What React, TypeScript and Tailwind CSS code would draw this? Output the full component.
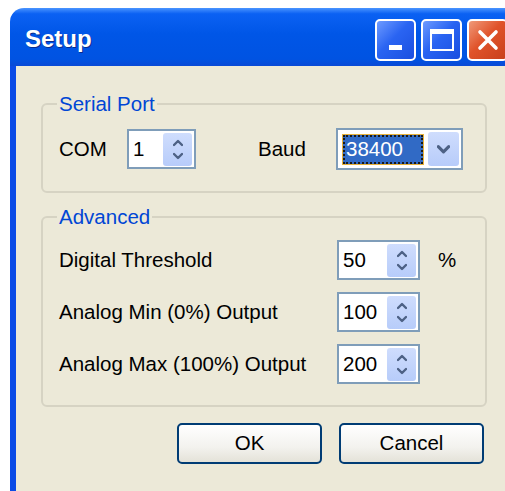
import React from 'react'

const font = "font-['Liberation_Sans',Arial,sans-serif]"

function Chevron({ dir, size = 10 }: { dir: 'up' | 'down'; size?: number }) {
  const d = dir === 'up' ? 'M1 6 L5 2 L9 6' : 'M1 2 L5 6 L9 2'
  return (
    <svg width={size} height={size * 0.8} viewBox="0 0 10 8" className="block">
      <path d={d} fill="none" stroke="#4D6185" strokeWidth="2.4" strokeLinecap="round" strokeLinejoin="round" />
    </svg>
  )
}

function SpinButton() {
  return (
    <div className="flex h-[33px] w-[29px] flex-col items-center justify-center gap-[5px] rounded-[3px] bg-[linear-gradient(to_bottom,#CFDDFD,#B7CCFA)]">
      <Chevron dir="up" />
      <Chevron dir="down" />
    </div>
  )
}

function Spin({ value, className }: { value: string; className: string }) {
  return (
    <div className={`flex h-[40px] items-center border-2 border-[#7F9DB9] bg-white pl-[4px] pr-[2px] ${className}`}>
      <span className="flex-1 leading-none">{value}</span>
      <SpinButton />
    </div>
  )
}

function GroupBox({ title, children }: { title: string; children: React.ReactNode }) {
  return (
    <fieldset className="w-[446px] rounded-[6px] border-2 border-[#D6D3C3] px-[16px] pb-[21px]">
      <legend className="-ml-[2px] px-[2px] leading-[24px] text-[#0046D5]">{title}</legend>
      {children}
    </fieldset>
  )
}

function TitleButton({ kind }: { kind: 'min' | 'max' | 'close' }) {
  const bg =
    kind === 'close'
      ? 'bg-[linear-gradient(135deg,#F09A7A,#E0532A_45%,#C8401C)]'
      : 'bg-[linear-gradient(135deg,#6E9BFF,#2A64F2_45%,#1A4FE0)]'
  return (
    <div className={`flex h-[42px] w-[41px] items-center justify-center rounded-[5px] border-2 border-white ${bg}`}>
      {kind === 'min' && <div className="mt-[14px] h-[5px] w-[13px] bg-white" />}
      {kind === 'max' && (
        <div className="h-[22px] w-[24px] border-2 border-t-[5px] border-white" />
      )}
      {kind === 'close' && (
        <svg width="24" height="24" viewBox="0 0 24 24">
          <path d="M4 4 L20 20 M20 4 L4 20" stroke="white" strokeWidth="3.6" strokeLinecap="round" />
        </svg>
      )}
    </div>
  )
}

export default function App() {
  return (
    <div className={`h-[491px] w-[505px] overflow-hidden bg-white pl-[10px] pt-[8px] text-[20.5px] text-black ${font}`}>
      <div className="w-[520px]">
        {/* title bar */}
        <div className="flex h-[58px] items-start rounded-t-[14px] bg-[linear-gradient(to_bottom,#4A94FF_0%,#0B61F3_10%,#0056E7_45%,#0053E2_88%,#0A4AD6_100%)] pl-[15px] pr-[22px]">
          <span className="mt-[19px] text-[24px] font-bold leading-none text-white [text-shadow:1px_1px_0_#0A2C8E]">
            Setup
          </span>
          <div className="ml-auto mt-[11px] flex gap-[5px]">
            <TitleButton kind="min" />
            <TitleButton kind="max" />
            <TitleButton kind="close" />
          </div>
        </div>

        {/* client area */}
        <div className="h-[430px] border-l-[6px] border-[#0A4BE6] bg-[#ECE9D8] pl-[25px] pt-[26px]">
          <GroupBox title="Serial Port">
            <div className="flex items-center pt-[12px]">
              <span className="w-[68px]">COM</span>
              <Spin value="1" className="w-[69px]" />
              <span className="ml-[62px] w-[78px]">Baud</span>
              <div className="flex h-[42px] w-[127px] items-center border-2 border-[#7F9DB9] bg-white pl-[5px] pr-[2px]">
                <span className="flex h-[29px] flex-1 items-center border-2 border-dotted border-[#1A1A1A] bg-[#316AC5] pl-[1px] leading-none text-white outline outline-1 outline-[#E7B23A]">
                  38400
                </span>
                <div className="ml-[5px] flex h-[34px] w-[31px] items-center justify-center rounded-[3px] bg-[linear-gradient(to_bottom,#CFDDFD,#B7CCFA)]">
                  <Chevron dir="down" size={13} />
                </div>
              </div>
            </div>
          </GroupBox>

          <div className="mt-[12px]">
            <GroupBox title="Advanced">
              <div className="flex flex-col gap-[12px] pt-[11px]">
                <div className="flex items-center">
                  <span className="w-[278px]">Digital Threshold</span>
                  <Spin value="50" className="w-[83px]" />
                  <span className="ml-[18px]">%</span>
                </div>
                <div className="flex items-center">
                  <span className="w-[278px]">Analog Min (0%) Output</span>
                  <Spin value="100" className="w-[83px]" />
                </div>
                <div className="flex items-center">
                  <span className="w-[278px]">Analog Max (100%) Output</span>
                  <Spin value="200" className="w-[83px]" />
                </div>
              </div>
            </GroupBox>
          </div>

          <div className="mt-[16px] flex w-[443px] justify-end gap-[17px]">
            <button className="h-[41px] w-[145px] rounded-[5px] border-2 border-[#003C74] bg-[linear-gradient(to_bottom,#FFFFFF,#F3F2EE_60%,#E4E2D8)]">
              OK
            </button>
            <button className="h-[41px] w-[145px] rounded-[5px] border-2 border-[#003C74] bg-[linear-gradient(to_bottom,#FFFFFF,#F3F2EE_60%,#E4E2D8)]">
              Cancel
            </button>
          </div>
        </div>
      </div>
    </div>
  )
}
